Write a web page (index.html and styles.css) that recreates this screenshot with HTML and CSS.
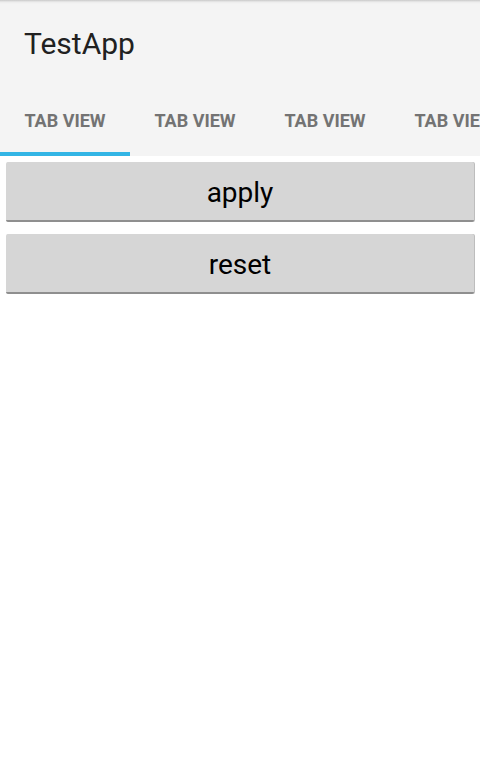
FILE: index.html
```html
<!DOCTYPE html>
<html>
<head>
<meta charset="utf-8">
<link rel="stylesheet" href="styles.css">
</head>
<body>
<div class="appbar">
  <div class="title">TestApp</div>
  <div class="tabs">
    <div class="tab active">TAB VIEW</div>
    <div class="tab">TAB VIEW</div>
    <div class="tab">TAB VIEW</div>
    <div class="tab">TAB VIEW</div>
  </div>
</div>
<div class="content">
  <button class="btn">apply</button>
  <button class="btn">reset</button>
</div>
</body>
</html>
```
FILE: styles.css
```css
html, body {
  margin: 0;
  padding: 0;
  background: #ffffff;
  font-family: Roboto, "Liberation Sans", sans-serif;
  width: 480px;
  height: 762px;
  overflow: hidden;
}
.appbar {
  background: #f4f4f4;
  height: 156px;
  display: flex;
  flex-direction: column;
  background-image: linear-gradient(to bottom, #c9c9c9 0px, #ececec 2px, #f4f4f4 4px);
}
.title {
  height: 86px;
  display: flex;
  align-items: center;
  padding-left: 24px;
  font-size: 30px;
  color: #212121;
  box-sizing: border-box;
}
.tabs {
  display: flex;
  height: 70px;
  white-space: nowrap;
  overflow: hidden;
}
.tab {
  flex: 0 0 130px;
  width: 130px;
  box-sizing: border-box;
  display: flex;
  align-items: center;
  justify-content: center;
  font-size: 18px;
  font-weight: bold;
  color: #737373;
  padding-top: 2px;
  border-bottom: 4px solid transparent;
}
.tab.active {
  border-bottom-color: #33b5e5;
}
.content {
  display: flex;
  flex-direction: column;
  padding: 6px 6px 0 6px;
  gap: 12px;
}
.btn {
  height: 60px;
  background: #d6d6d6;
  border: none;
  border-bottom: 2px solid #8f8f8f;
  border-radius: 2px;
  box-shadow: 1px 0 0 #bdbdbd;
  font-family: Roboto, "Liberation Sans", sans-serif;
  font-size: 28px;
  color: #000000;
  padding: 2px 0 0 0;
  margin: 0;
}
```
